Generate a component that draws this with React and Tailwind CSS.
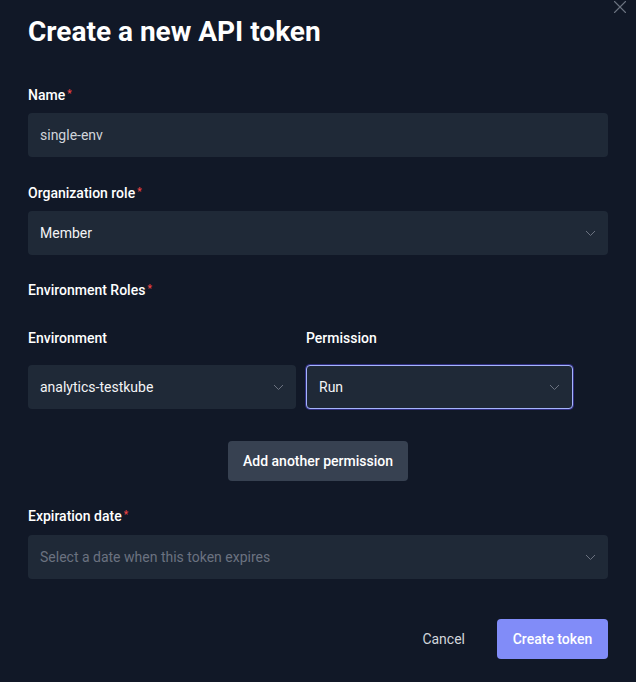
import { X } from "lucide-react";

function Label({ children, required }) {
    return (
        <label className="block text-sm leading-5 font-medium text-white">
            {children}
            {required && <span className="text-[10px] text-[#ef4444] ml-[2px] align-top relative -top-[1px]">*</span>}
        </label>
    );
}

function Chevron() {
    return (
        <svg width="11" height="7" viewBox="0 0 11 7" fill="none" className="shrink-0">
            <path d="M1 1l4.5 4.5L10 1" stroke="#6b7280" strokeWidth="1" />
        </svg>
    );
}

function Select({ value, placeholder, focused }) {
    return (
        <div
            className={`h-11 rounded bg-[#1f2937] flex items-center justify-between pl-3 pr-3 ${
                focused ? "border border-[#a5b4fc] shadow-[0_0_0_1px_#312e81]" : ""
            }`}
        >
            {value ? (
                <span className="text-sm text-[#f3f4f6]">{value}</span>
            ) : (
                <span className="text-sm text-[#6b7280]">{placeholder}</span>
            )}
            <Chevron />
        </div>
    );
}

export default function App() {
    return (
        <div className="relative w-full min-h-[682px] bg-[#111827] px-7 pt-[14px] font-['Roboto',sans-serif]">
            {/* close */}
            <button className="absolute -top-1 right-[5px] text-[#6b7280]">
                <X size={22} strokeWidth={1.2} />
            </button>

            <h1 className="text-[28px] leading-9 font-bold text-white">Create a new API token</h1>

            <div className="mt-[35px]">
                <Label required>Name</Label>
                <div className="mt-2 h-11 rounded bg-[#1f2937] flex items-center px-3">
                    <span className="text-sm text-[#d1d5db]">single-env</span>
                </div>
            </div>

            <div className="mt-[26px]">
                <Label required>Organization role</Label>
                <div className="mt-2">
                    <Select value="Member" />
                </div>
            </div>

            <div className="mt-[25px]">
                <Label required>Environment Roles</Label>
            </div>

            <div className="mt-[28px] grid grid-cols-[268px_267px] gap-x-[10px]">
                <Label>Environment</Label>
                <Label>Permission</Label>
                <div className="mt-[17px]">
                    <Select value="analytics-testkube" />
                </div>
                <div className="mt-[17px]">
                    <Select value="Run" focused />
                </div>
            </div>

            <div className="mt-8 flex justify-center">
                <button className="h-10 w-[180px] rounded bg-[#374151] text-sm font-medium text-white">
                    Add another permission
                </button>
            </div>

            <div className="mt-[25px]">
                <Label required>Expiration date</Label>
                <div className="mt-[9px]">
                    <Select placeholder="Select a date when this token expires" />
                </div>
            </div>

            <div className="mt-10 flex justify-end items-center gap-4 pb-[23px]">
                <button className="h-10 px-4 text-sm text-[#d1d5db]">Cancel</button>
                <button className="h-10 w-[111px] rounded bg-[#818cf8] text-sm font-medium text-white">
                    Create token
                </button>
            </div>
        </div>
    );
}
